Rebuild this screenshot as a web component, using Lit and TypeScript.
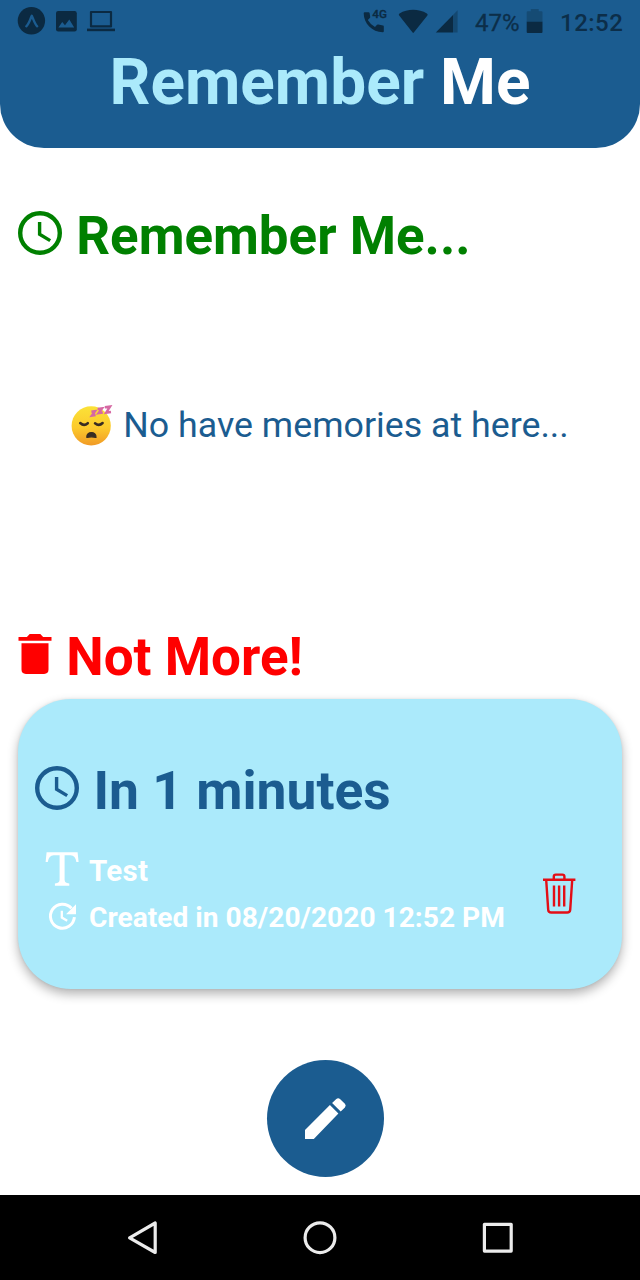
import { LitElement, html, css } from "lit";
import { customElement, property } from "lit/decorators.js";

const clock = html`<svg class="clock" viewBox="0 0 44 44" width="44" height="44">
  <circle cx="22" cy="22" r="19.8" fill="none" stroke="currentColor" stroke-width="4.4" />
  <path d="M21.6 11V23.3L32.2 29.6" fill="none" stroke="currentColor" stroke-width="3.4" />
</svg>`;

@customElement("status-bar")
class StatusBar extends LitElement {
  static styles = css`
    :host { display: flex; height: 44px; justify-content: space-between; color: #0b2a42; font-family: Roboto, sans-serif; }
    svg { display: block; flex: none; }
    .right { display: flex; padding-right: 16px; }
    .label { font-size: 24px; line-height: 46px; white-space: nowrap; flex: none; opacity: 0.9; }
    .percent { width: 51px; margin-left: 12px; font-weight: 400; -webkit-text-stroke: 0.3px currentColor; }
    .time { width: 64px; margin-left: 16px; font-weight: 500; letter-spacing: 0.5px; }
    .net { font: 500 11px Roboto, sans-serif; }
  `;
  render() {
    return html`
      <svg viewBox="0 0 120 44" width="120" height="44">
        <circle cx="31.4" cy="20.7" r="13.7" fill="currentColor" />
        <path d="M26.3 26.3C29 24 30.2 19 31.8 15.8C33.4 19 34.6 24 37.2 26.3" fill="none" stroke="#1b5c90" stroke-width="2.4" stroke-linecap="round" stroke-linejoin="round" />
        <rect x="56" y="11" width="20.8" height="20.4" rx="2.2" fill="currentColor" />
        <path d="M58.4 27.6L62.2 22L65 25.2L69.3 19.6L74.2 27.6Z" fill="#1b5c90" />
        <path d="M91 12H111V26.4H91Z" fill="none" stroke="currentColor" stroke-width="2.2" stroke-linejoin="round" />
        <path d="M87 29.9H115" stroke="currentColor" stroke-width="2.6" />
      </svg>
      <div class="right">
        <svg viewBox="360 0 103 44" width="103" height="44">
          <path d="M364.8 12.2H368.6Q369.4 12.2 369.6 13L370.2 16.8Q370.3 17.5 369.8 18L367.8 19.9Q370.5 24.5 375 26.9L377 24.8Q377.6 24.3 378.3 24.5L383 25.5Q383.8 25.7 383.8 26.5V31.2Q383.8 32.2 382.8 32.2C372 32 363.8 23.5 363.7 13.2Q363.7 12.2 364.8 12.2Z" fill="currentColor" />
          <text class="net" x="372.3" y="18.4" textLength="14.6" lengthAdjust="spacingAndGlyphs" fill="currentColor" stroke="currentColor" stroke-width=".3">4G</text>
          <path d="M399 15.2Q398.4 14.3 399.5 13.6C407.5 8.6 418.8 8.6 426.9 13.6Q428.2 14.4 427.4 15.5L413.8 32.6Q413.2 33.2 412.6 32.6Z" fill="currentColor" />
          <path d="M453 15V32.6H457.6V10.3Z" fill="currentColor" opacity=".4" />
          <path d="M453 15V32.6H435.8Z" fill="currentColor" />
        </svg>
        <div class="label percent">47%</div>
        <svg viewBox="525.5 0 18 44" width="18" height="44">
          <path d="M526.2 22V12.2Q526.2 11.2 527.2 11.2H530.3V9H538.2V11.2H541Q542 11.2 542 12.2V22Z" fill="currentColor" opacity=".35" />
          <path d="M526.2 21.8H542V32Q542 33 541 33H527.2Q526.2 33 526.2 32Z" fill="currentColor" />
        </svg>
        <div class="label time">12:52</div>
      </div>`;
  }
}

@customElement("memory-card")
class MemoryCard extends LitElement {
  @property() when = "";
  @property() text = "";
  @property() created = "";
  static styles = css`
    :host { display: flex; box-sizing: border-box; height: 290px; background: #abeafb; border-radius: 53px; color: #fff; font-family: Roboto, sans-serif; box-shadow: 0 5px 11px rgba(0, 0, 0, 0.3), 0 0 3px rgba(0, 0, 0, 0.08); }
    svg { display: block; flex: none; }
    .info { flex: 1; padding: 60px 0 0 17px; }
    .row { display: flex; white-space: nowrap; font-weight: 700; }
    .when { color: #1b5c90; font-size: 53.4px; line-height: 64px; gap: 14.5px; }
    .clock { margin-top: 7px; }
    .line { line-height: 46px; height: 46px; }
    .first { margin-top: 25px; font-size: 29.5px; letter-spacing: 0.35px; }
    .stamp { font-size: 28.15px; line-height: 47px; }
    .mark { width: 54px; height: 46px; }
    .remove { padding: 172px 44px 0 0; }
  `;
  render() {
    return html`
      <div class="info">
        <div class="row when">${clock}<span>${this.when}</span></div>
        <div class="row line first">
          <svg class="mark" viewBox="35 848 54 46"><path d="M46.6 852.2H77.6L78.6 862H76.4Q75.4 855.2 70.5 855.2H64.6V880Q64.6 882.4 67 883L69.3 883.6V885.7H54.9V883.6L57.2 883Q59.6 882.4 59.6 880V855.2H53.7Q48.8 855.2 47.8 862H45.6Z" fill="currentColor" /></svg>
          <span>${this.text}</span>
        </div>
        <div class="row line stamp">
          <svg class="mark" viewBox="35 894 54 46">
            <path d="M71.5 908.3A12 12 0 1 0 74.4 917.2" fill="none" stroke="currentColor" stroke-width="3" />
            <path d="M76 904.2V914.2H66Z" fill="currentColor" />
            <path d="M61.8 910.8V917.6L67.2 920.8" fill="none" stroke="currentColor" stroke-width="2.3" />
          </svg>
          <span>Created in ${this.created}</span>
        </div>
      </div>
      <div class="remove">
        <svg viewBox="542 871 36 46" width="36" height="46" fill="none" stroke="#e30e16" stroke-width="2.4">
          <path d="M543 879.8H575.4M553.8 879V876.6Q553.8 874.6 555.8 874.6H562.4Q564.4 874.6 564.4 876.6V879M546.2 880L548.2 909.8Q548.5 912.5 551.2 912.5H567.2Q569.9 912.5 570.2 909.8L572.2 880" />
          <path d="M554 885.5V906.5M559.1 885.5V906.5M564.2 885.5V906.5" />
        </svg>
      </div>`;
  }
}

@customElement("app-root")
class AppRoot extends LitElement {
  static styles = css`
    :host { display: flex; flex-direction: column; height: 1280px; width: 640px; overflow: hidden; background: #fff; font-family: Roboto, sans-serif; }
    svg { display: block; flex: none; }
    header { height: 147.5px; background: #1b5c90; border-radius: 0 0 44px 44px; }
    h1 { margin: 0; font-size: 63.9px; line-height: 78px; font-weight: 700; text-align: center; color: #fff; white-space: nowrap; }
    .light { color: #abeafb; }
    h2 { margin: 0; display: flex; font-size: 52.9px; line-height: 64px; height: 64px; font-weight: 700; white-space: nowrap; padding-left: 18px; }
    .active { color: #008000; margin-top: 56.5px; gap: 14.5px; line-height: 65px; }
    .clock { margin-top: 7px; }
    .active .clock { margin-left: -0.3px; }
    .expired { color: #f00; gap: 14.3px; font-size: 53px; }
    .bin { margin-top: 8px; }
    .empty { height: 357px; display: flex; justify-content: center; color: #1b5c90; font-size: 35.75px; line-height: 51px; white-space: nowrap; padding-top: 132px; box-sizing: border-box; gap: 10px; }
    .face { margin-top: 3px; }
    memory-card { margin: 10px 18px 0; }
    .fab { margin: 71px 0 0 267px; width: 117px; height: 117px; flex: none; border-radius: 50%; background: #1b5c90; border: 0; padding: 0; }
    nav { margin-top: auto; height: 85.5px; background: #000; }
  `;
  render() {
    return html`
      <header>
        <status-bar></status-bar>
        <h1><span class="light">Remember</span> Me</h1>
      </header>
      <h2 class="active">${clock}<span>Remember Me...</span></h2>
      <div class="empty">
        <svg class="face" viewBox="72 403 42 44" width="42" height="44">
          <defs>
            <linearGradient id="skin" x1="0" y1="0" x2="0" y2="1">
              <stop offset="0" stop-color="#fbe238" />
              <stop offset=".55" stop-color="#fcca2c" />
              <stop offset="1" stop-color="#f19a26" />
            </linearGradient>
          </defs>
          <circle cx="92.2" cy="425.8" r="19.6" fill="url(#skin)" />
          <path d="M81.2 423Q85 426.6 88.8 423.2M96 423.2Q100 426.6 103.6 423" fill="none" stroke="#382c23" stroke-width="2.5" stroke-linecap="round" />
          <path d="M87.8 437.4C87.4 431 97.4 431 97 437.4Q92.4 436.2 87.8 437.4Z" fill="#382c23" stroke="#382c23" stroke-width="1.2" stroke-linejoin="round" />
          <path d="M92.4 411.8L96 411.2L93 415.6L96.6 415M98.6 409L103 408.4L99.6 413L103.8 412.4M105.8 407.2L111 406.6L107.2 412.6L112 412" fill="none" stroke="#d668a3" stroke-width="2.5" />
        </svg>
        <span>No have memories at here...</span>
      </div>
      <h2 class="expired">
        <svg class="bin" viewBox="17.5 633 34 42" width="34" height="42" fill="currentColor">
          <path d="M18 637H26.4L29.2 634H39.8L42.6 637H51V640.8H18ZM21 643.2H48V669.5Q48 673.9 43.6 673.9H25.4Q21 673.9 21 669.5Z" />
        </svg>
        <span>Not More!</span>
      </h2>
      <memory-card when="In 1 minutes" text="Test" created="08/20/2020 12:52 PM"></memory-card>
      <button class="fab" aria-label="Edit">
        <svg viewBox="267 1059.5 117 117" width="117" height="117" fill="#fff">
          <path d="M305 1129.4L329.9 1104.6L338.4 1113L313.8 1138.4H305ZM332.1 1102.4L336.3 1098.4Q338.2 1096.9 340 1098.5L344.9 1103.3Q346.5 1105.1 344.9 1106.9L340.7 1111Z" />
        </svg>
      </button>
      <nav>
        <svg viewBox="0 1194.5 640 85.5" width="640" height="85.5" fill="none" stroke="#ececec" stroke-width="3.2" stroke-linejoin="round">
          <path d="M129.6 1237.3L155.2 1222.5V1252Z" />
          <circle cx="320" cy="1237.2" r="14.9" />
          <rect x="484.4" y="1223.8" width="26.8" height="26.8" />
        </svg>
      </nav>`;
  }
}
